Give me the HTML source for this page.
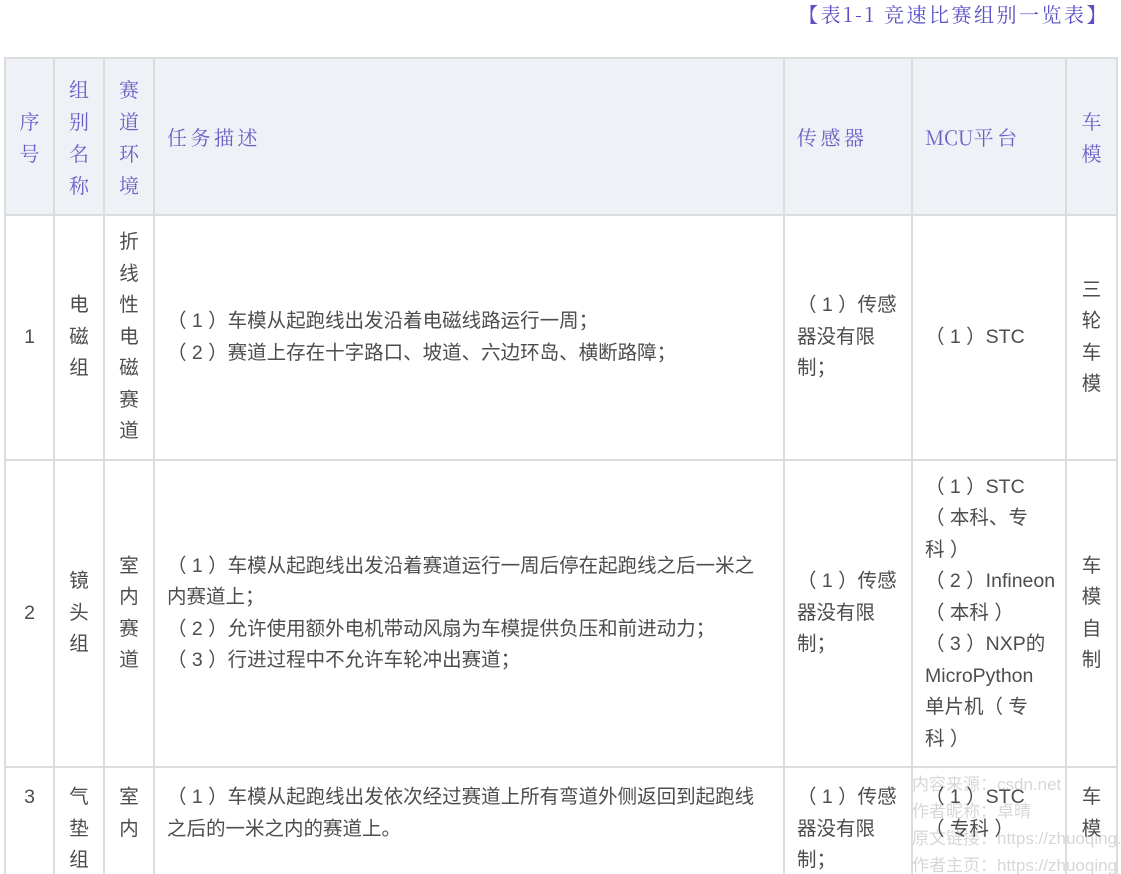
<!DOCTYPE html>
<html><head><meta charset="utf-8"><style>
html,body{margin:0;padding:0;background:#fff;width:1121px;height:874px;overflow:hidden;position:relative}
*{text-spacing-trim:space-all;font-feature-settings:"chws" 0,"halt" 0}
.title{position:absolute;right:12px;top:0px;font:20px/28px "Noto Serif CJK SC","Liberation Serif",serif;color:#5a4fc4;letter-spacing:2.5px}
table{position:absolute;left:4px;top:57px;border-collapse:collapse;table-layout:fixed;width:1112px;font:19.5px/31.5px "Liberation Sans","Noto Sans CJK SC",sans-serif;color:#4d4d4d}
td,th{border:2px solid #dcdcdc;padding:0 12px;vertical-align:middle;overflow:hidden;white-space:nowrap}
th{background:#eef1f5;font:20px/32px "Noto Serif CJK SC","Liberation Serif",serif;color:#6a5fc8;text-align:left;font-weight:normal;letter-spacing:3.5px}
th.c{letter-spacing:0}
.m{letter-spacing:0}
.c{text-align:center;padding:0}
.t td{vertical-align:top;padding-top:14px}
.t td.c{padding:14px 0 0}
.wm{position:absolute;left:912px;top:771px;font:17px/27px "Liberation Sans","Noto Sans CJK SC",sans-serif;color:rgba(0,0,0,0.16);white-space:nowrap}
</style></head><body>
<div class="title">【表1-1 竞速比赛组别一览表】</div>
<table>
<colgroup><col style="width:49px"><col style="width:50px"><col style="width:50px"><col style="width:630px"><col style="width:128px"><col style="width:154px"><col style="width:51px"></colgroup>
<tr style="height:157px"><th class="c">序<br>号</th><th class="c">组<br>别<br>名<br>称</th><th class="c">赛<br>道<br>环<br>境</th><th>任务描述</th><th>传感器</th><th><span class="m">MCU</span>平台</th><th class="c">车<br>模</th></tr>
<tr style="height:245px"><td class="c">1</td><td class="c">电<br>磁<br>组</td><td class="c">折<br>线<br>性<br>电<br>磁<br>赛<br>道</td><td>（ 1 ）车模从起跑线出发沿着电磁线路运行一周；<br>（ 2 ）赛道上存在十字路口、坡道、六边环岛、横断路障；</td><td>（ 1 ）传感<br>器没有限<br>制；</td><td>（ 1 ）STC</td><td class="c">三<br>轮<br>车<br>模</td></tr>
<tr style="height:307px"><td class="c">2</td><td class="c">镜<br>头<br>组</td><td class="c">室<br>内<br>赛<br>道</td><td>（ 1 ）车模从起跑线出发沿着赛道运行一周后停在起跑线之后一米之<br>内赛道上；<br>（ 2 ）允许使用额外电机带动风扇为车模提供负压和前进动力；<br>（ 3 ）行进过程中不允许车轮冲出赛道；</td><td>（ 1 ）传感<br>器没有限<br>制；</td><td>（ 1 ）STC<br>（ 本科、专<br>科 ）<br>（ 2 ）Infineon<br>（ 本科 ）<br>（ 3 ）NXP的<br>MicroPython<br>单片机（ 专<br>科 ）</td><td class="c">车<br>模<br>自<br>制</td></tr>
<tr class="t" style="height:200px"><td class="c">3</td><td class="c">气<br>垫<br>组</td><td class="c">室<br>内</td><td>（ 1 ）车模从起跑线出发依次经过赛道上所有弯道外侧返回到起跑线<br>之后的一米之内的赛道上。</td><td>（ 1 ）传感<br>器没有限<br>制；</td><td>（ 1 ）STC<br>（ 专科 ）</td><td class="c">车<br>模</td></tr>
</table>
<div class="wm">内容来源：csdn.net<br>作者昵称：卓晴<br>原文链接：https://zhuoqing.<br>作者主页：https://zhuoqing</div>
</body></html>
